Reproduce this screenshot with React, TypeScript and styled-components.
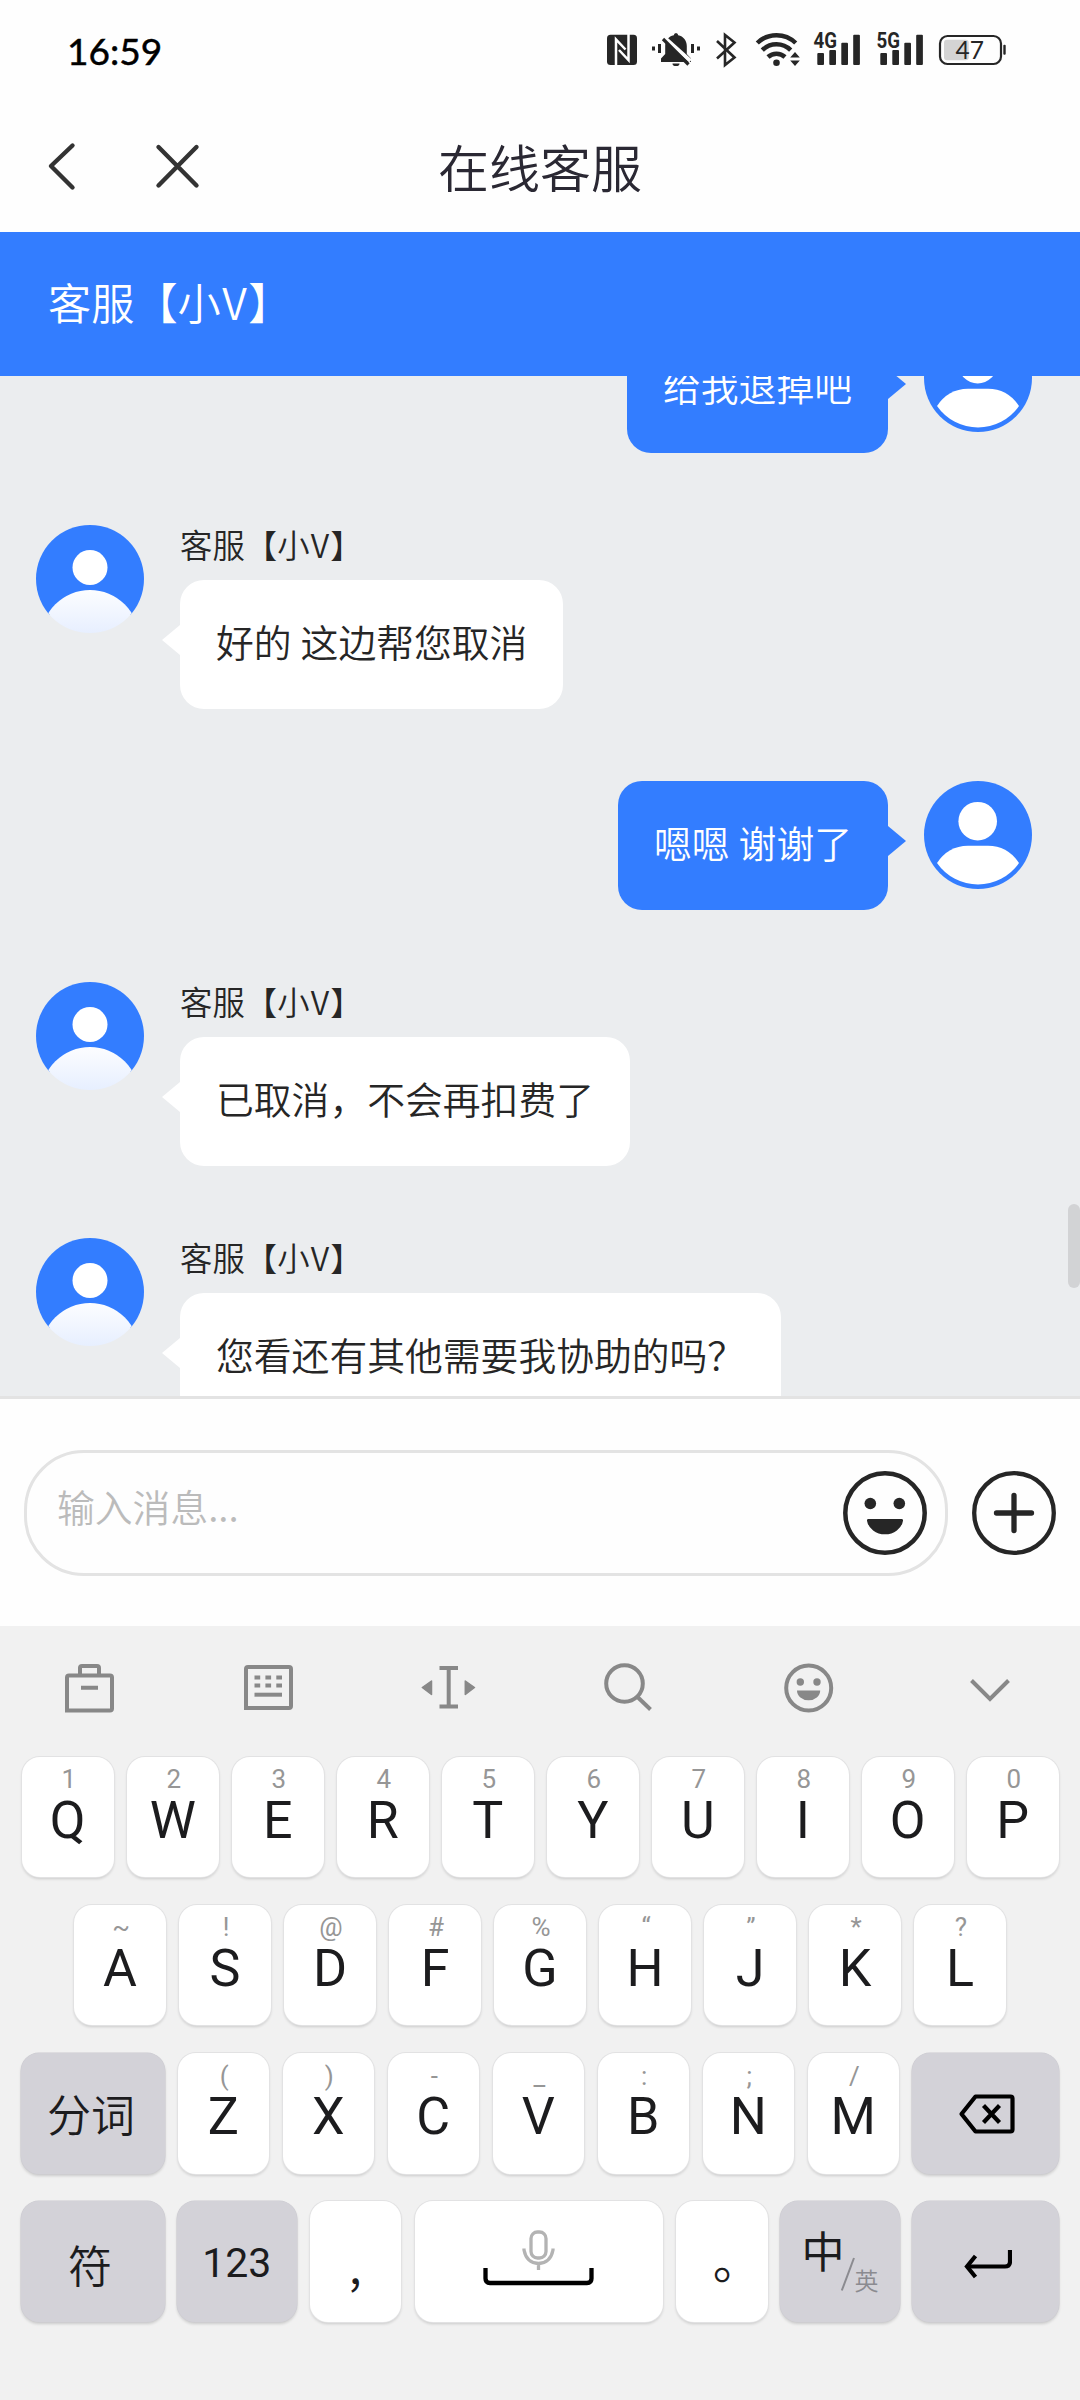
import React from "react";
import styled, { createGlobalStyle, css } from "styled-components";

const CJK = `"Noto Sans CJK SC", "Noto Sans", sans-serif`;
const LATIN = `Roboto, "Noto Sans CJK SC", sans-serif`;
const BLUE = "#337dff";
const INK = "#262626";

const Global = createGlobalStyle`
  *, *::before, *::after { box-sizing: border-box; }
  body { margin: 0; background: #fff; font-family: ${CJK}; font-weight: 350; }
  svg { display: block; flex: none; }
`;

const Screen = styled.main`
  width: 1080px;
  height: 2400px;
  display: flex;
  flex-direction: column;
  overflow: hidden;
  background: #fefefe;
`;

/* ---------- status bar ---------- */

const StatusBar = styled.header`
  height: 100px;
  flex: none;
  display: flex;
  align-items: center;
  justify-content: space-between;
  padding: 0 74px 0 67px;
`;

const Clock = styled.time`
  font: 400 37px/44px Lato, sans-serif;
  -webkit-text-stroke: 0.5px #000;
  color: #000;
  padding-top: 2px;
`;

const StatusIcons = styled.div`
  display: flex;
  align-items: center;
  color: ${INK};
`;

/* ---------- title bar ---------- */

const TitleBar = styled.nav`
  height: 132px;
  flex: none;
  display: grid;
  grid-template-columns: 240px 1fr 240px;
  align-items: center;
`;

const NavButtons = styled.div`
  display: flex;
`;

const Title = styled.h1`
  margin: 0;
  text-align: center;
  font-size: 51px;
  line-height: 60px;
  font-weight: 350;
  color: #2a2833;
  padding-bottom: 1px;
`;

const AgentBar = styled.div`
  height: 144px;
  flex: none;
  display: flex;
  align-items: center;
  padding: 0 0 7px 48px;
  background: ${BLUE};
  color: #fff;
  font-size: 43.2px;
`;

const WideLetter = styled.span`
  padding: 0 0.035em;
`;

/* ---------- chat ---------- */

const Chat = styled.section`
  position: relative;
  height: 1020px;
  flex: none;
  overflow: hidden;
  background: #ebedef;
`;

const Messages = styled.div`
  display: flex;
  flex-direction: column;
  gap: 72px;
  margin-top: -52px;
  padding: 0 48px 0 36px;
`;

const MessageRow = styled.div<{ $mine?: boolean }>`
  display: flex;
  flex-direction: ${(p) => (p.$mine ? "row-reverse" : "row")};
  align-items: flex-start;
  gap: 36px;
`;

const MessageBody = styled.div`
  display: flex;
  flex-direction: column;
  align-items: flex-start;
`;

const Sender = styled.div`
  height: 55px;
  font-size: 32.4px;
  line-height: 37px;
  color: ${INK};
`;

const Bubble = styled.div<{ $mine?: boolean }>`
  position: relative;
  height: 129px;
  padding: 0 36px;
  border-radius: 24px;
  font-size: 37.8px;
  line-height: 122px;
  word-spacing: 0.6px;
  white-space: nowrap;
  background: ${(p) => (p.$mine ? BLUE : "#fff")};
  color: ${(p) => (p.$mine ? "#fff" : INK)};

  &::after {
    content: "";
    position: absolute;
    top: 45px;
    border: 15px solid transparent;
    ${(p) =>
      p.$mine
        ? css`
            left: 100%;
            border-left: 18px solid ${BLUE};
            border-right: 0;
          `
        : css`
            right: 100%;
            border-right: 18px solid #fff;
            border-left: 0;
          `}
  }
`;

const ScrollThumb = styled.div`
  position: absolute;
  right: 0;
  top: 828px;
  width: 12px;
  height: 84px;
  border-radius: 6px;
  background: #d2d3d5;
`;

/* ---------- composer ---------- */

const Composer = styled.section`
  height: 230px;
  flex: none;
  display: flex;
  align-items: center;
  gap: 24px;
  padding: 0 24px;
  border-top: 3px solid #e3e3e3;
`;

const InputBox = styled.div`
  width: 924px;
  height: 126px;
  display: flex;
  align-items: center;
  justify-content: space-between;
  padding: 0 18px 0 30px;
  border: 3px solid #e3e3e3;
  border-radius: 60px;
`;

const Placeholder = styled.span`
  font-size: 37.8px;
  line-height: 50px;
  font-weight: 350;
  color: #bbb;
  padding-bottom: 13px;
`;

/* ---------- keyboard ---------- */

const Keyboard = styled.section`
  flex: 1;
  background: #f1f1f1;
`;

const Toolbar = styled.div`
  height: 123px;
  display: grid;
  grid-template-columns: repeat(6, 180px);
  align-items: center;
  justify-items: center;
  color: #888;
`;

const KeyRows = styled.div`
  display: flex;
  flex-direction: column;
  gap: 27.8px;
  padding-top: 7.6px;
`;

const KeyRow = styled.div<{ $centered?: boolean }>`
  display: flex;
  gap: 13.5px;
  padding-left: ${(p) => (p.$centered ? 0 : 22)}px;
  justify-content: ${(p) => (p.$centered ? "center" : "flex-start")};
`;

const Key = styled.div<{ $w?: number }>`
  flex: none;
  width: ${(p) => p.$w ?? 91.5}px;
  height: 120.5px;
  display: flex;
  flex-direction: column;
  align-items: center;
  border-radius: 18px;
  background: #fff;
  box-shadow: 0 0 0 1px #e2e2e3, 0 2px 3px rgba(0, 0, 0, 0.16);
  color: #1c1c1e;
  font-family: ${LATIN};
`;

const FnKey = styled(Key)`
  margin: 0 -1px;
  justify-content: center;
  background: #d3d2d8;
  box-shadow: 0 0 0 0.5px #cbcad0, 0 2px 3px rgba(0, 0, 0, 0.16);
  font-size: 44px;
  line-height: 60px;
`;

const SpaceKey = styled(Key)`
  justify-content: center;
  padding: 0 2px 6px 0;
`;

const Hint = styled.span`
  height: 30px;
  margin-top: 7.5px;
  padding-left: 2px;
  font-size: 26px;
  font-weight: 400;
  line-height: 30px;
  color: #969696;
`;

const Letter = styled.span`
  height: 60px;
  margin-top: -3.5px;
  font-size: 52px;
  font-weight: 400;
  line-height: 60px;
`;

const Digits = styled.span`
  font-size: 41px;
  font-weight: 400;
  padding-top: 3px;
`;

const Hanzi = styled.span<{ $drop?: number; $left?: number }>`
  font-family: ${CJK};
  padding-top: ${(p) => p.$drop ?? 0}px;
  padding-right: ${(p) => p.$left ?? 0}px;
`;

const Mark = styled.span<{ $shift: number; $top: number }>`
  font-family: ${CJK};
  font-size: 48px;
  line-height: 60px;
  margin-top: ${(p) => p.$top}px;
  padding-left: ${(p) => p.$shift}px;
`;

const LangKey = styled(FnKey)`
  flex-direction: row;
  align-items: flex-start;
  justify-content: flex-start;
  font-family: ${CJK};
  padding-left: 21.5px;
`;

const LangMain = styled.span`
  width: 39px;
  font-size: 43px;
  font-weight: 400;
  line-height: 60px;
  margin-top: 18px;
`;

const LangAlt = styled.span`
  font-size: 24px;
  line-height: 30px;
  margin-top: 64px;
  color: #8b8b90;
`;

/* ---------- drawings ---------- */

const AgentAvatar = ({ id }: { id: string }) => (
  <svg width="108" height="108" viewBox="0 0 108 108">
    <defs>
      <clipPath id={`c-${id}`}>
        <circle cx="54" cy="54" r="54" />
      </clipPath>
      <linearGradient id={`g-${id}`} x1="0" y1="65" x2="0" y2="108" gradientUnits="userSpaceOnUse">
        <stop offset="0" stopColor="#fcfdff" />
        <stop offset="1" stopColor="#e7efff" />
      </linearGradient>
    </defs>
    <g clipPath={`url(#c-${id})`}>
      <rect width="108" height="90" fill={BLUE} />
      <circle cx="54" cy="42.5" r="17.5" fill="#fff" />
      <circle cx="54" cy="114" r="49" fill={`url(#g-${id})`} />
    </g>
  </svg>
);

const UserAvatar = () => (
  <svg width="108" height="108" viewBox="0 0 108 108">
    <circle cx="54" cy="54" r="54" fill={BLUE} />
    <circle cx="53.7" cy="40.2" r="19.3" fill="#fff" />
    <path d="M13 82Q24 65 44 64.7H64Q84 65 95 82A50 50 0 0 1 13 82Z" fill="#fff" />
  </svg>
);

const NfcIcon = () => (
  <svg width="37" height="40" viewBox="0 0 37 40">
    <rect x="0" y="4.7" width="30" height="30.3" rx="3.5" fill="currentColor" />
    <path d="M9 36V9.500L18.500 19.500M21.500 4V30L12 20" fill="none" stroke="#fefefe" strokeWidth="2.500" />
  </svg>
);

const MutedBellIcon = () => (
  <svg width="64" height="40" viewBox="644 30 64 40">
    <g fill="currentColor">
      <path d="M676 33a2.4 2.4 0 0 1 2.2 2.2c5.200 1 8.600 5.200 8.600 10.800v8l4.200 4.600v3.400h-30v-3.400l4.200-4.600v-8c0-5.600 3.400-9.800 8.600-10.800a2.400 2.400 0 0 1 2.200-2.200z" />
      <path d="M672.500 63.500h7a3.500 2.600 0 0 1-7 0z" />
      <rect x="652" y="46.500" width="3" height="4" />
      <rect x="658" y="44" width="3" height="9" />
      <rect x="691" y="44" width="3" height="9" />
      <rect x="697" y="46.500" width="3" height="4" />
    </g>
    <path d="M661 34.500L690.500 61" stroke="#fefefe" strokeWidth="4" />
    <path d="M663 39L688.500 64.500" stroke="currentColor" strokeWidth="3.200" />
  </svg>
);

const BluetoothIcon = () => (
  <svg width="38" height="40" viewBox="708 30 38 40">
    <path
      d="M717 41L734.500 57.500L725 65V35L734.500 42.500L717 58.500"
      fill="none"
      stroke="currentColor"
      strokeWidth="2.600"
      strokeLinejoin="miter"
    />
  </svg>
);

const WifiIcon = () => (
  <svg width="61" height="40" viewBox="746 30 61 40">
    <g fill="none" stroke="currentColor" strokeWidth="4.500">
      <path d="M757.300 43a27.500 27.500 0 0 1 38.400 0" />
      <path d="M762.300 50.200a20 20 0 0 1 28.400 0" />
      <path d="M768 57a12.500 12.500 0 0 1 17 0" />
    </g>
    <circle cx="776.500" cy="62.700" r="3.300" fill="currentColor" />
    <path d="M795 52l4.800 5.500h-9.600zM795 66l4.800-5.500h-9.600z" fill="currentColor" />
  </svg>
);

const SignalIcon = ({ label, width }: { label: string; width: number }) => (
  <svg width={width} height="56" viewBox={`807 22 ${width} 56`}>
    <g fill="currentColor">
      <rect x="817.300" y="53" width="6.700" height="12" rx="1" />
      <rect x="829.300" y="50" width="6.700" height="15" rx="1" />
      <rect x="841.300" y="42.700" width="6.700" height="22.300" rx="1" />
      <rect x="853.200" y="34.700" width="6.700" height="30.300" rx="1" />
      <text
        x="813.500"
        y="48.200"
        fontFamily="Roboto, sans-serif"
        fontWeight="700"
        fontSize="21.500"
        textLength="23.500"
        lengthAdjust="spacingAndGlyphs"
      >
        {label}
      </text>
    </g>
  </svg>
);

const BatteryIcon = ({ level }: { level: number }) => (
  <svg width="75" height="40" viewBox="931 30 75 40">
    <rect x="944" y="39.700" width="24.700" height="20.500" rx="3" fill="#d4d4d4" />
    <rect x="940" y="36" width="61" height="28" rx="7.500" fill="none" stroke="currentColor" strokeWidth="2.200" />
    <rect x="1003.300" y="44.700" width="2.400" height="10" rx="1" fill="currentColor" />
    <text x="969.700" y="59.200" textAnchor="middle" fontFamily="Lato, sans-serif" fontWeight="400" fontSize="24.500" fill="currentColor">
      {level}
    </text>
  </svg>
);

const BackIcon = () => (
  <svg width="120" height="60" viewBox="0 136 120 60">
    <path d="M72.500 145.500L51 166L72.500 187.500" fill="none" stroke="#333" strokeWidth="4.400" strokeLinecap="round" strokeLinejoin="round" />
  </svg>
);

const CloseIcon = () => (
  <svg width="120" height="60" viewBox="120 136 120 60">
    <path d="M158.500 147L196.500 185.500M196.500 147L158.500 185.500" stroke="#333" strokeWidth="4.400" strokeLinecap="round" />
  </svg>
);

const EmojiButton = () => (
  <svg width="84" height="84" viewBox="0 0 84 84">
    <circle cx="42" cy="42" r="39.700" fill="none" stroke={INK} strokeWidth="4.500" />
    <circle cx="27.300" cy="32.500" r="5.800" fill={INK} />
    <circle cx="56.300" cy="32.500" r="5.800" fill={INK} />
    <path d="M25.500 48h33a1.500 1.500 0 0 1 1.500 1.700a18.200 16 0 0 1-36 0a1.500 1.500 0 0 1 1.500-1.700z" fill={INK} />
  </svg>
);

const PlusButton = () => (
  <svg width="84" height="84" viewBox="0 0 84 84">
    <circle cx="42" cy="42" r="39.800" fill="none" stroke={INK} strokeWidth="4.300" />
    <path d="M24.500 42h35M42 24.500v35" stroke={INK} strokeWidth="5.300" strokeLinecap="round" />
  </svg>
);

const ToolIcon = ({ children }: { children: React.ReactNode }) => (
  <svg width="60" height="60" viewBox="0 0 60 60" fill="none" stroke="currentColor" strokeWidth="4">
    {children}
  </svg>
);

const Tools = () => (
  <Toolbar>
    <ToolIcon>
      <path d="M7 52.500V19.500q0-2 2-2H50q2 0 2 2V50.500q0 2-2 2zM20 17V10q0-2 2-2H37q2 0 2 2V17M21 29.700H38" />
    </ToolIcon>
    <ToolIcon>
      <path d="M6 50V11q0-2 2-2H49q2 0 2 2V48q0 2-2 2z" />
      <path d="M14.500 19.500h27.500M14.500 27.500h27.500" strokeDasharray="5.700 5.200" />
      <path d="M14.500 36.700h27.500" />
    </ToolIcon>
    <ToolIcon>
      <path d="M19.500 10H38M19.500 48.500H38M28.700 10V48.500" />
      <path d="M2.300 29.500L11.500 23V36.500ZM54.500 29.500L45.300 23V36.500Z" fill="currentColor" strokeWidth="1.500" strokeLinejoin="round" />
    </ToolIcon>
    <ToolIcon>
      <circle cx="24.500" cy="25.500" r="18.300" />
      <path d="M37.500 39L50.500 51.500" />
    </ToolIcon>
    <ToolIcon>
      <circle cx="28.700" cy="30" r="22.500" />
      <g fill="currentColor" stroke="none">
        <circle cx="20.300" cy="24" r="3.700" />
        <circle cx="37" cy="24" r="3.700" />
        <path d="M17 32.500H40.200A11.600 9.800 0 0 1 17 32.500Z" />
      </g>
    </ToolIcon>
    <ToolIcon>
      <path d="M11.500 22.500L30 41L48.500 22.500" />
    </ToolIcon>
  </Toolbar>
);

const BackspaceIcon = () => (
  <svg width="60" height="44" viewBox="-1.500 0 60 44" fill="none" stroke="#000" strokeWidth="4.200" strokeLinejoin="round">
    <path d="M19 5.500H54q2 0 2 2V38.500q0 2-2 2H19L5 23Z" />
    <path d="M27 14.500L43 31.500M43 14.500L27 31.500" />
  </svg>
);

const EnterIcon = () => (
  <svg width="54" height="36" viewBox="-3 -1 54 36" fill="none" stroke="#000" strokeWidth="4.200">
    <path d="M49 5V16.500q0 5-5 5H6" />
    <path d="M14.500 11L6 21.500L14.500 32" />
  </svg>
);

const SpaceIcon = () => (
  <svg width="114" height="62" viewBox="0 0 114 62" fill="none">
    <g stroke="#b3b3b3" strokeWidth="3.300">
      <rect x="50" y="4" width="15" height="26" rx="6.500" />
      <path d="M43 20.500v1.500q2.500 13 14.500 13.500q12-.5 14.500-13.500v-1.500M57.500 36v6" />
    </g>
    <path d="M4.500 40V50.500q0 4.500 4.500 4.500H106q4.500 0 4.500-4.500V40" stroke="#000" strokeWidth="4.300" />
  </svg>
);

const SlashIcon = styled.svg`
  margin-top: 56px;
`;

/* ---------- data ---------- */

type Message = { text: string; mine?: boolean };

const messages: Message[] = [
  { text: "给我退掉吧", mine: true },
  { text: "好的 这边帮您取消" },
  { text: "嗯嗯 谢谢了", mine: true },
  { text: "已取消，不会再扣费了" },
  { text: "您看还有其他需要我协助的吗？" },
];

const rowOne = ["Q1", "W2", "E3", "R4", "T5", "Y6", "U7", "I8", "O9", "P0"];
const rowTwo = ["A~", "S!", "D@", "F#", "G%", "H“", "J”", "K*", "L?"];
const rowThree = ["Z(", "X)", "C-", "V_", "B:", "N;", "M/"];

const AgentName = () => (
  <span>
    客服【小<WideLetter>V</WideLetter>】
  </span>
);

const LetterKey = ({ pair }: { pair: string }) => (
  <Key>
    <Hint>{pair[1]}</Hint>
    <Letter>{pair[0]}</Letter>
  </Key>
);

export default function App() {
  return (
    <Screen>
      <Global />
      <StatusBar>
        <Clock>16:59</Clock>
        <StatusIcons>
          <NfcIcon />
          <MutedBellIcon />
          <BluetoothIcon />
          <WifiIcon />
          <SignalIcon label="4G" width={62.8} />
          <SignalIcon label="5G" width={61.2} />
          <BatteryIcon level={47} />
        </StatusIcons>
      </StatusBar>

      <TitleBar>
        <NavButtons>
          <BackIcon />
          <CloseIcon />
        </NavButtons>
        <Title>在线客服</Title>
      </TitleBar>

      <AgentBar>
        <AgentName />
      </AgentBar>

      <Chat>
        <Messages>
          {messages.map((m, i) => (
            <MessageRow key={i} $mine={m.mine}>
              {m.mine ? <UserAvatar /> : <AgentAvatar id={String(i)} />}
              <MessageBody>
                {!m.mine && (
                  <Sender>
                    <AgentName />
                  </Sender>
                )}
                <Bubble $mine={m.mine}>{m.text}</Bubble>
              </MessageBody>
            </MessageRow>
          ))}
        </Messages>
        <ScrollThumb />
      </Chat>

      <Composer>
        <InputBox>
          <Placeholder>输入消息...</Placeholder>
          <EmojiButton />
        </InputBox>
        <PlusButton />
      </Composer>

      <Keyboard>
        <Tools />
        <KeyRows>
          <KeyRow>
            {rowOne.map((p) => (
              <LetterKey key={p} pair={p} />
            ))}
          </KeyRow>
          <KeyRow $centered>
            {rowTwo.map((p) => (
              <LetterKey key={p} pair={p} />
            ))}
          </KeyRow>
          <KeyRow>
            <FnKey $w={144}>
              <Hanzi $left={4}>分词</Hanzi>
            </FnKey>
            {rowThree.map((p) => (
              <LetterKey key={p} pair={p} />
            ))}
            <FnKey $w={147}>
              <BackspaceIcon />
            </FnKey>
          </KeyRow>
          <KeyRow>
            <FnKey $w={144}>
              <Hanzi $drop={4} $left={6}>符</Hanzi>
            </FnKey>
            <FnKey $w={120.5}>
              <Digits>123</Digits>
            </FnKey>
            <Key>
              <Mark $shift={0} $top={32}>,</Mark>
            </Key>
            <SpaceKey $w={248}>
              <SpaceIcon />
            </SpaceKey>
            <Key>
              <Mark $shift={30} $top={27}>。</Mark>
            </Key>
            <LangKey $w={120}>
              <LangMain>中</LangMain>
              <SlashIcon width="14" height="34" viewBox="0 0 14 34">
                <path d="M0.800 33.500L13 1" stroke="#8b8b90" strokeWidth="2" />
              </SlashIcon>
              <LangAlt>英</LangAlt>
            </LangKey>
            <FnKey $w={147}>
              <EnterIcon />
            </FnKey>
          </KeyRow>
        </KeyRows>
      </Keyboard>
    </Screen>
  );
}
